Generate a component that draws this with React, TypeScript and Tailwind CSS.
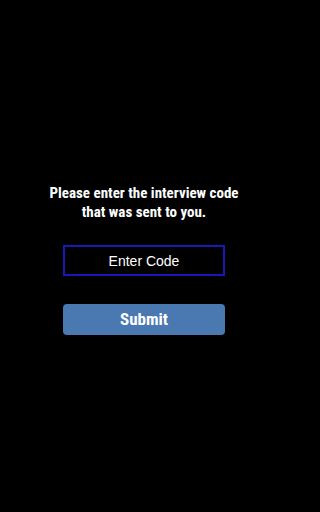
export default function App() {
  return (
    <div className="min-h-[512px] w-full bg-black">
      <div className="w-[288px] min-h-[512px] flex flex-col items-center pt-[184px]">
        <p className="text-white text-center text-[15px] leading-[19px] font-bold font-['Roboto_Condensed',sans-serif]">
          Please enter the interview code
          <br />
          that was sent to you.
        </p>
        <input
          placeholder="Enter Code"
          className="mt-[23px] w-[162px] h-[31px] bg-black border-2 border-[#1818b8] text-center text-[14px] text-white placeholder:text-white outline-none font-['Liberation_Sans',sans-serif]"
        />
        <button className="mt-[28px] w-[162px] h-[31px] rounded-[4px] bg-[#4a78b1] text-white text-[17px] font-bold font-['Roboto_Condensed',sans-serif]">
          Submit
        </button>
      </div>
    </div>
  );
}
